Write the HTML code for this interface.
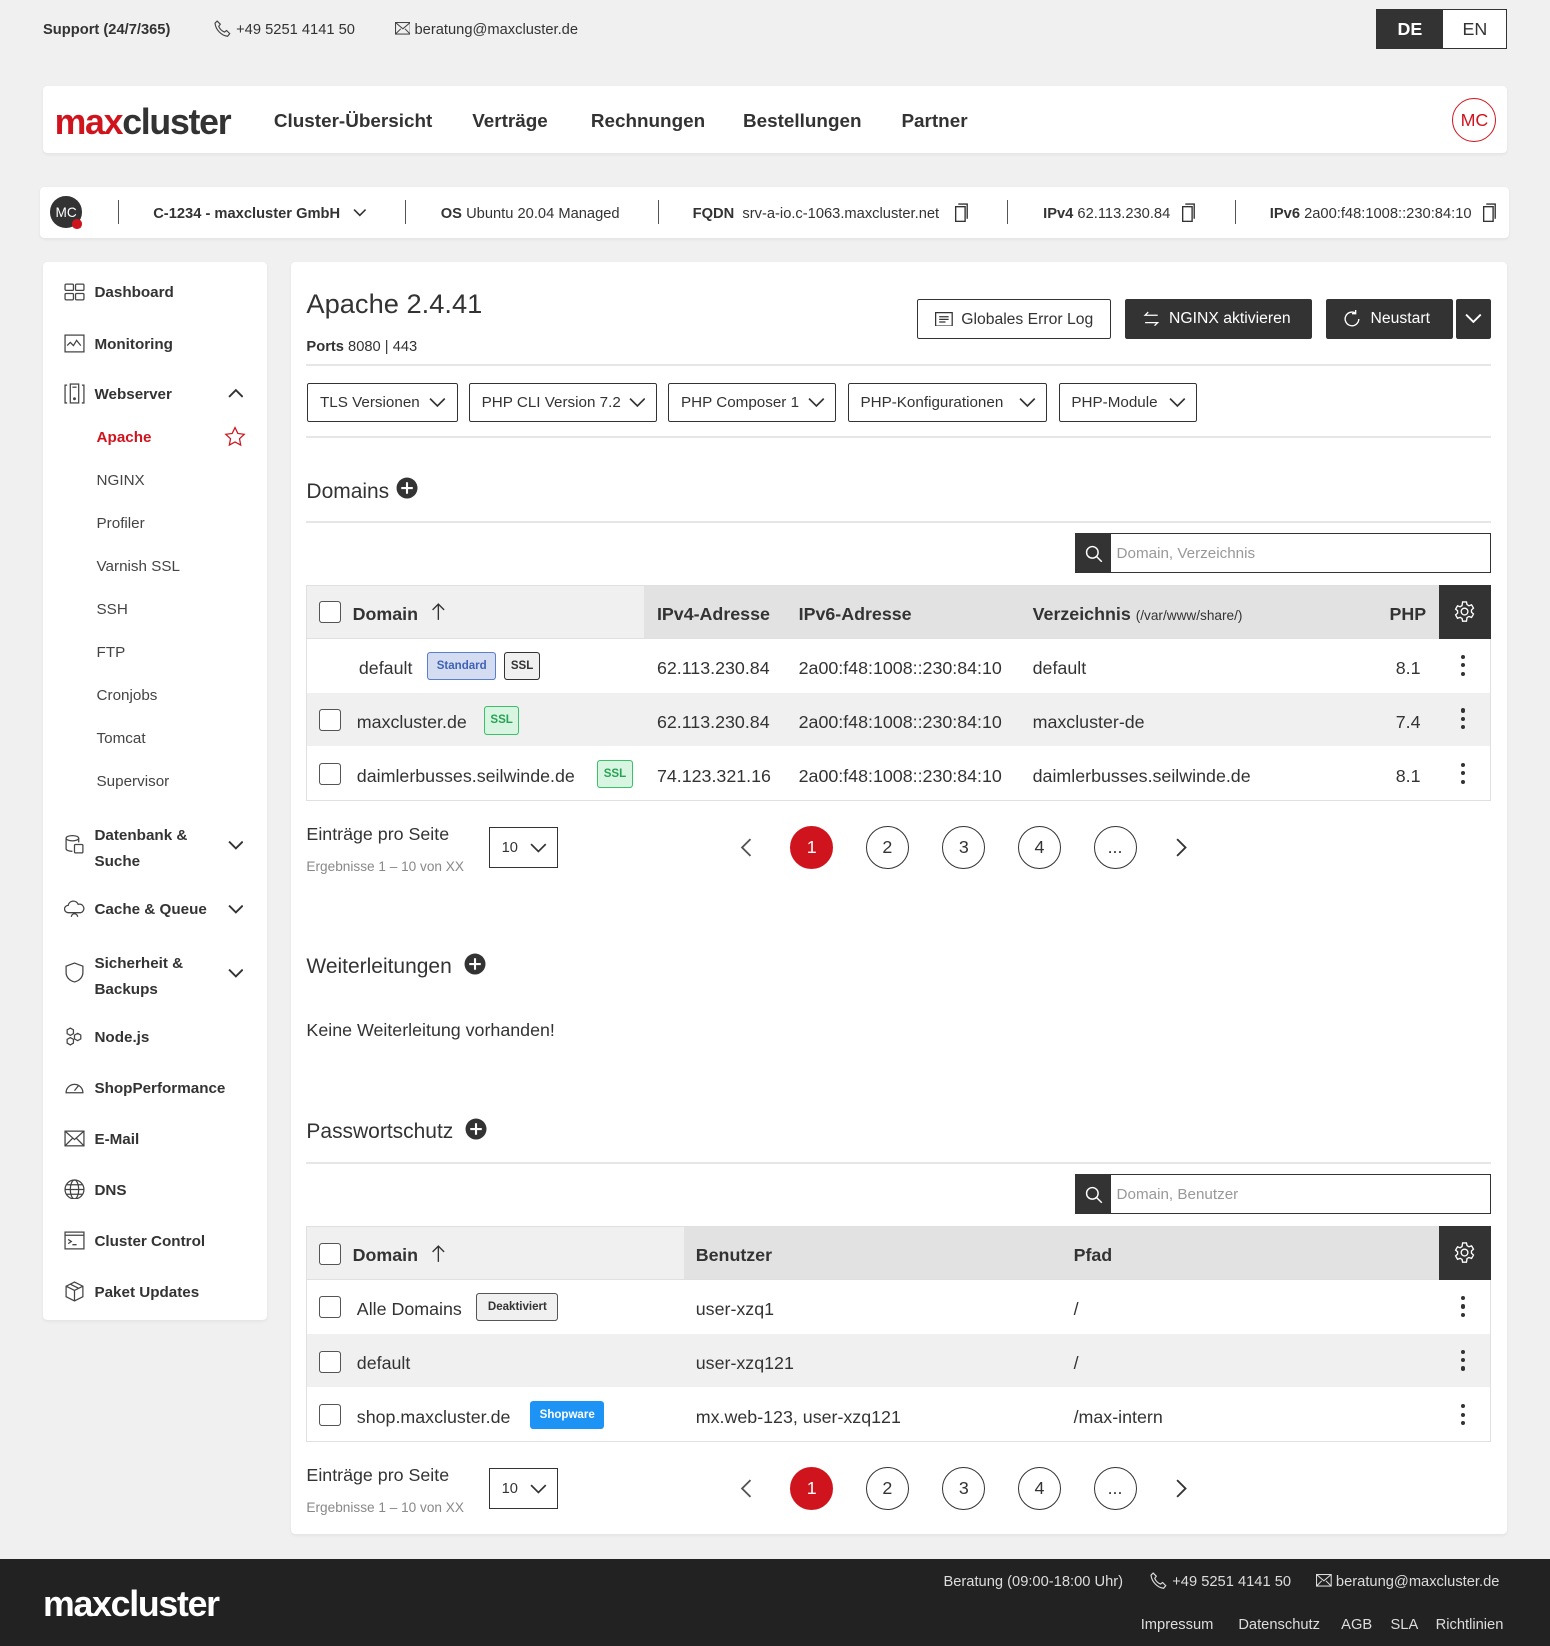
<!DOCTYPE html>
<html><head><meta charset="utf-8">
<style>
*{box-sizing:border-box;margin:0;padding:0}
html,body{width:1550px;height:1646px;overflow:hidden;background:#f0f0f0}
#w{zoom:1.04943;width:1477px;height:1569px;position:relative;font-family:"Liberation Sans",sans-serif;color:#333;background:#f0f0f0}
.a{position:absolute}
.t{position:absolute;line-height:20px;white-space:nowrap;margin-top:2px}
.card{position:absolute;background:#fff;border-radius:4px;box-shadow:0 1px 3px rgba(0,0,0,.06)}
.b{font-weight:bold}
.nav{font-size:18px;font-weight:bold;color:#333}
.sb{font-size:14.5px;font-weight:bold}
.sub{font-size:14.5px;color:#444}
.ic{position:absolute;width:20px;height:20px;left:61px}
.hr{position:absolute;height:2px;background:#e6e6e6}
.dd{position:absolute;height:37px;top:365px;border:1px solid #333;border-radius:2px;font-size:14.5px;padding:0 11px;line-height:37px;color:#333;background:#fff}
.dd svg{position:absolute;right:10px;top:11px}
.h2{font-size:20px;color:#333}
.row{position:absolute;left:292px;width:1129px;height:52px;border:1px solid #e0e0e0;border-top:none}
.cb{position:absolute;width:21px;height:21px;border:1.5px solid #555;border-radius:3px;background:#fff}
.td{font-size:17px;color:#333}
.th{font-size:17px;font-weight:bold;color:#333}
.badge{position:absolute;height:27px;border-radius:3px;font-size:11px;font-weight:bold;line-height:25px;text-align:center}
.pc{position:absolute;width:41px;height:41px;border-radius:50%;border:1.5px solid #333;text-align:center;line-height:39px;font-size:17px}
.dots{position:absolute;width:4px}
.dots i{display:block;width:4px;height:4px;border-radius:50%;background:#333;margin-bottom:4px}
.search{position:absolute;left:1024px;width:397px;height:38px;border:1px solid #333;background:#fff}
.search .ico{position:absolute;left:0;top:0;width:34px;height:36px;background:#333}
.search span{position:absolute;left:39px;top:10px;font-size:14.5px;color:#999}
.btn{position:absolute;top:285px;height:38px;border-radius:2px;font-size:15px;font-weight:bold;line-height:38px}
</style></head><body><div id="w">

<div class="t b" style="left:41px;top:17px;font-size:14px">Support (24/7/365)</div>
<svg class="a" style="left:204px;top:19px" width="16" height="17" viewBox="0 0 16 17"><path d="M3 1l3 3-1.5 2c1 2.5 3 4.5 5.5 5.5L12 10l3 3-2 2.5C7 15 1.5 9 1 3z" fill="none" stroke="#444" stroke-width="1.1"/></svg>
<div class="t" style="left:225px;top:17px;font-size:14px">+49 5251 4141 50</div>
<svg class="a" style="left:376px;top:21px" width="15" height="12" viewBox="0 0 15 12"><rect x=".5" y=".5" width="14" height="11" fill="none" stroke="#444"/><path d="M.5 .5l7 6 7-6M.5 11.5l5-5M14.5 11.5l-5-5" fill="none" stroke="#444"/></svg>
<div class="t" style="left:395px;top:17px;font-size:14px">beratung@maxcluster.de</div>
<div class="a" style="left:1311px;top:9px;width:125px;height:38px;border:1px solid #333;background:#fff">
 <div class="a b" style="left:0;top:0;width:63px;height:36px;background:#333;color:#fff;text-align:center;line-height:38px;font-size:17px">DE</div>
 <div class="a" style="left:63px;top:0;width:61px;height:36px;text-align:center;line-height:38px;font-size:17px">EN</div>
</div>

<div class="card" style="left:41px;top:82px;width:1395px;height:64px"></div>
<div class="t b" style="left:52px;top:96px;font-size:34px;line-height:38px;letter-spacing:-1.2px"><span style="color:#d0141e">max</span><span style="color:#333">cluster</span></div>
<div class="t nav" style="left:261px;top:104px">Cluster-Übersicht</div>
<div class="t nav" style="left:450px;top:104px">Verträge</div>
<div class="t nav" style="left:563px;top:104px">Rechnungen</div>
<div class="t nav" style="left:708px;top:104px">Bestellungen</div>
<div class="t nav" style="left:859px;top:104px">Partner</div>
<div class="a" style="left:1384px;top:93px;width:42px;height:42px;border:1.5px solid #d0141e;border-radius:50%;color:#d0141e;text-align:center;line-height:41px;font-size:17px">MC</div>

<div class="card" style="left:38px;top:178px;width:1400px;height:49px"></div>
<div class="a" style="left:48px;top:187px;width:30px;height:30px;border-radius:50%;background:#333;color:#fff;font-size:13px;text-align:center;line-height:32px">MC</div>
<div class="a" style="left:69px;top:209px;width:9px;height:9px;border-radius:50%;background:#d0141e"></div>
<div class="a" style="left:112px;top:191px;width:1px;height:22px;background:#555"></div>
<div class="a" style="left:386px;top:191px;width:1px;height:22px;background:#555"></div>
<div class="a" style="left:627px;top:191px;width:1px;height:22px;background:#555"></div>
<div class="a" style="left:960px;top:191px;width:1px;height:22px;background:#555"></div>
<div class="a" style="left:1177px;top:191px;width:1px;height:22px;background:#555"></div>
<div class="t b" style="left:146px;top:192px;font-size:14px">C-1234 - maxcluster GmbH</div>
<svg class="a" style="left:336px;top:198px" width="13" height="9" viewBox="0 0 13 9"><path d="M1 1.5l5.5 5.5 5.5-5.5" fill="none" stroke="#333" stroke-width="1.5"/></svg>
<div class="t" style="left:420px;top:192px;font-size:14px"><b>OS</b> Ubuntu 20.04 Managed</div>
<div class="t" style="left:660px;top:192px;font-size:14px"><b>FQDN</b>&nbsp; srv-a-io.c-1063.maxcluster.net</div>
<svg class="a" style="left:907px;top:193px" width="16" height="19" viewBox="0 0 16 19"><rect x="3.5" y="3.5" width="9" height="14" fill="none" stroke="#333" stroke-width="1.3"/><path d="M6 1h8.5v14" fill="none" stroke="#333" stroke-width="1.3"/></svg>
<div class="t" style="left:994px;top:192px;font-size:14px"><b>IPv4</b> 62.113.230.84</div>
<svg class="a" style="left:1123px;top:193px" width="16" height="19" viewBox="0 0 16 19"><rect x="3.5" y="3.5" width="9" height="14" fill="none" stroke="#333" stroke-width="1.3"/><path d="M6 1h8.5v14" fill="none" stroke="#333" stroke-width="1.3"/></svg>
<div class="t" style="left:1210px;top:192px;font-size:14px"><b>IPv6</b> 2a00:f48:1008::230:84:10</div>
<svg class="a" style="left:1410px;top:193px" width="16" height="19" viewBox="0 0 16 19"><rect x="3.5" y="3.5" width="9" height="14" fill="none" stroke="#333" stroke-width="1.3"/><path d="M6 1h8.5v14" fill="none" stroke="#333" stroke-width="1.3"/></svg>

<div class="card" style="left:41px;top:250px;width:213px;height:1008px"></div>
<svg class="ic" style="top:269px" viewBox="0 0 20 20" fill="none" stroke="#444" stroke-width="1.2"><rect x="1" y="2" width="8" height="6" rx="1"/><rect x="11" y="2" width="8" height="6" rx="1"/><rect x="1" y="11" width="8" height="6" rx="1"/><rect x="11" y="11" width="8" height="6" rx="1"/></svg>
<div class="t sb" style="left:90px;top:268px">Dashboard</div>
<svg class="ic" style="top:317px" viewBox="0 0 20 20" fill="none" stroke="#444" stroke-width="1.2"><rect x="1" y="2" width="18" height="16"/><path d="M3 12l3-3 3 3 3-5 4 5"/></svg>
<div class="t sb" style="left:90px;top:317px">Monitoring</div>
<svg class="ic" style="top:365px" viewBox="0 0 20 20" fill="none" stroke="#444" stroke-width="1.2"><path d="M3 2H1v17h2M17 2h2v17h-2"/><rect x="6" y="1" width="8" height="18"/><path d="M8 4h4"/><circle cx="10" cy="15" r=".8" fill="#444"/></svg>
<div class="t sb" style="left:90px;top:365px">Webserver</div>
<svg class="a" style="left:217px;top:370px" width="15" height="10" viewBox="0 0 15 10"><path d="M1 8.5l6.5-6.5 6.5 6.5" fill="none" stroke="#333" stroke-width="1.8"/></svg>
<div class="t sb" style="left:92px;top:406px;color:#d0141e">Apache</div>
<svg class="a" style="left:213px;top:406px" width="21" height="20" viewBox="0 0 21 20"><path d="M10.5 1.5l2.7 5.6 6.1.8-4.5 4.2 1.1 6.1-5.4-3-5.4 3 1.1-6.1-4.5-4.2 6.1-.8z" fill="none" stroke="#d0141e" stroke-width="1.2"/></svg>
<div class="t sub" style="left:92px;top:447px">NGINX</div>
<div class="t sub" style="left:92px;top:488px">Profiler</div>
<div class="t sub" style="left:92px;top:529px">Varnish SSL</div>
<div class="t sub" style="left:92px;top:570px">SSH</div>
<div class="t sub" style="left:92px;top:611px">FTP</div>
<div class="t sub" style="left:92px;top:652px">Cronjobs</div>
<div class="t sub" style="left:92px;top:693px">Tomcat</div>
<div class="t sub" style="left:92px;top:734px">Supervisor</div>
<svg class="ic" style="top:795px" viewBox="0 0 20 20" fill="none" stroke="#444" stroke-width="1.2"><ellipse cx="8" cy="4" rx="6" ry="2.5"/><path d="M2 4v10c0 1.4 2.7 2.5 6 2.5M14 4v4"/><rect x="10" y="10" width="8" height="8" rx="1"/></svg>
<div class="t sb" style="left:90px;top:782px;line-height:25px">Datenbank &amp;<br>Suche</div>
<svg class="a" style="left:217px;top:800px" width="15" height="10" viewBox="0 0 15 10"><path d="M1 1.5l6.5 6.5 6.5-6.5" fill="none" stroke="#333" stroke-width="1.8"/></svg>
<svg class="ic" style="top:856px" viewBox="0 0 20 20" fill="none" stroke="#444" stroke-width="1.2"><path d="M4 14a3.5 3.5 0 010-7 5 5 0 019.5-1A4 4 0 0116 14zM7 18a3 3 0 016-0"/></svg>
<div class="t sb" style="left:90px;top:856px">Cache &amp; Queue</div>
<svg class="a" style="left:217px;top:861px" width="15" height="10" viewBox="0 0 15 10"><path d="M1 1.5l6.5 6.5 6.5-6.5" fill="none" stroke="#333" stroke-width="1.8"/></svg>
<svg class="ic" style="top:917px" viewBox="0 0 20 20" fill="none" stroke="#444" stroke-width="1.2"><path d="M10 1l8 3v6c0 5-4 8-8 9-4-1-8-4-8-9V4z"/></svg>
<div class="t sb" style="left:90px;top:904px;line-height:25px">Sicherheit &amp;<br>Backups</div>
<svg class="a" style="left:217px;top:922px" width="15" height="10" viewBox="0 0 15 10"><path d="M1 1.5l6.5 6.5 6.5-6.5" fill="none" stroke="#333" stroke-width="1.8"/></svg>
<svg class="ic" style="top:978px" viewBox="0 0 20 20" fill="none" stroke="#444" stroke-width="1.2"><path d="M6 2l3 1.7v3.6L6 9 3 7.3V3.7zM13 7l3 1.7v3.6L13 14l-3-1.7V8.7zM6 11l3 1.7v3.6L6 18l-3-1.7v-3.6z"/></svg>
<div class="t sb" style="left:90px;top:978px">Node.js</div>
<svg class="ic" style="top:1026px" viewBox="0 0 20 20" fill="none" stroke="#444" stroke-width="1.2"><path d="M2 15a8 8 0 1116 0z"/><path d="M10 13l4-5"/></svg>
<div class="t sb" style="left:90px;top:1026px">ShopPerformance</div>
<svg class="ic" style="top:1075px" viewBox="0 0 20 20" fill="none" stroke="#444" stroke-width="1.2"><rect x="1" y="3" width="18" height="14"/><path d="M1 3l9 8 9-8M1 17l7-7M19 17l-7-7"/></svg>
<div class="t sb" style="left:90px;top:1075px">E-Mail</div>
<svg class="ic" style="top:1123px" viewBox="0 0 20 20" fill="none" stroke="#444" stroke-width="1.2"><circle cx="10" cy="10" r="9"/><ellipse cx="10" cy="10" rx="4" ry="9"/><path d="M1 10h18M2.5 5.5h15M2.5 14.5h15"/></svg>
<div class="t sb" style="left:90px;top:1123px">DNS</div>
<svg class="ic" style="top:1172px" viewBox="0 0 20 20" fill="none" stroke="#444" stroke-width="1.2"><rect x="1" y="2" width="18" height="16"/><path d="M1 5h18M4 9l3 2-3 2M8 14h4"/></svg>
<div class="t sb" style="left:90px;top:1172px">Cluster Control</div>
<svg class="ic" style="top:1221px" viewBox="0 0 20 20" fill="none" stroke="#444" stroke-width="1.2"><path d="M10 1l8 4v10l-8 4-8-4V5zM2 5l8 4 8-4M10 9v10M6 3l8 4"/></svg>
<div class="t sb" style="left:90px;top:1221px">Paket Updates</div>

<div class="card" style="left:277px;top:250px;width:1159px;height:1212px"></div>
<div class="t" style="left:292px;top:272px;font-size:26px;line-height:30px">Apache 2.4.41</div>
<div class="t" style="left:292px;top:319px;font-size:14px"><b>Ports</b> 8080 | 443</div>

<div class="btn" style="left:874px;width:185px;border:1px solid #333;background:#fff;color:#333;font-weight:normal">
 <svg class="a" style="left:16px;top:11px" width="17" height="14" viewBox="0 0 17 14" fill="none" stroke="#333" stroke-width="1.2"><rect x=".6" y=".6" width="15.8" height="12.8"/><path d="M4 4.5h9M4 7h9M4 9.5h6"/></svg>
 <span class="a" style="left:41px">Globales Error Log</span></div>
<div class="btn" style="left:1072px;width:178px;background:#333;color:#fff;font-weight:normal">
 <svg class="a" style="left:17px;top:10px" width="16" height="17" viewBox="0 0 16 17" fill="none" stroke="#fff" stroke-width="1.2"><path d="M14 5H2l3-3M2 12h12l-3 3"/></svg>
 <span class="a" style="left:42px">NGINX aktivieren</span></div>
<div class="btn" style="left:1264px;width:121px;background:#333;color:#fff;font-weight:normal">
 <svg class="a" style="left:15px;top:9px" width="19" height="19" viewBox="0 0 19 19" fill="none" stroke="#fff" stroke-width="1.3"><path d="M16 9.5A6.5 6.5 0 1113 4M13 1v3.5h-3.5"/></svg>
 <span class="a" style="left:42px">Neustart</span></div>
<div class="btn" style="left:1387px;width:34px;background:#333">
 <svg class="a" style="left:9px;top:13px" width="16" height="10" viewBox="0 0 16 10"><path d="M1 1.5l7 7 7-7" fill="none" stroke="#fff" stroke-width="1.8"/></svg></div>

<div class="hr" style="left:292px;top:347px;width:1129px"></div>
<div class="dd" style="left:293px;width:143px">TLS Versionen<svg width="16" height="12" viewBox="0 0 16 12"><path d="M1 2.5l7 7 7-7" fill="none" stroke="#333" stroke-width="1.6"/></svg></div>
<div class="dd" style="left:447px;width:179px">PHP CLI Version 7.2<svg width="16" height="12" viewBox="0 0 16 12"><path d="M1 2.5l7 7 7-7" fill="none" stroke="#333" stroke-width="1.6"/></svg></div>
<div class="dd" style="left:637px;width:160px">PHP Composer 1<svg width="16" height="12" viewBox="0 0 16 12"><path d="M1 2.5l7 7 7-7" fill="none" stroke="#333" stroke-width="1.6"/></svg></div>
<div class="dd" style="left:808px;width:190px">PHP-Konfigurationen<svg width="16" height="12" viewBox="0 0 16 12"><path d="M1 2.5l7 7 7-7" fill="none" stroke="#333" stroke-width="1.6"/></svg></div>
<div class="dd" style="left:1009px;width:132px">PHP-Module<svg width="16" height="12" viewBox="0 0 16 12"><path d="M1 2.5l7 7 7-7" fill="none" stroke="#333" stroke-width="1.6"/></svg></div>
<div class="hr" style="left:292px;top:415px;width:1129px"></div>

<div class="t h2" style="left:292px;top:455px;line-height:22px">Domains</div>
<svg class="a" style="left:377px;top:455px" width="21" height="21" viewBox="0 0 21 21"><circle cx="10.5" cy="10.5" r="10" fill="#333"/><path d="M10.5 5v11M5 10.5h11" stroke="#fff" stroke-width="2"/></svg>
<div class="hr" style="left:292px;top:496px;width:1129px"></div>
<div class="search" style="top:508px"><div class="ico"><svg class="a" style="left:9px;top:10px" width="17" height="17" viewBox="0 0 17 17" fill="none" stroke="#fff" stroke-width="1.4"><circle cx="7" cy="7" r="5.5"/><path d="M11 11l5 5"/></svg></div><span>Domain, Verzeichnis</span></div>

<div class="a" style="left:292px;top:557px;width:1129px;height:52px;background:#e2e2e2;border:1px solid #e0e0e0"></div>
<div class="a" style="left:293px;top:558px;width:321px;height:50px;background:#f0f0f0"></div>
<div class="a" style="left:1371px;top:557px;width:50px;height:52px;background:#333"></div>
<svg class="a" style="left:1385px;top:572px" width="22" height="22" viewBox="0 0 24 24" fill="none" stroke="#fff" stroke-width="1.4"><circle cx="12" cy="12" r="3.5"/><path d="M10 2h4l.6 2.8 2 1.2 2.7-1 2 3.5-2.1 1.9v2.3l2.1 1.9-2 3.5-2.7-1-2 1.2L14 22h-4l-.6-2.8-2-1.2-2.7 1-2-3.5 2.1-1.9v-2.3L2.7 9.5l2-3.5 2.7 1 2-1.2z"/></svg>
<div class="cb" style="left:304px;top:573px"></div>
<div class="t th" style="left:336px;top:574px">Domain</div>
<svg class="a" style="left:411px;top:574px" width="14" height="18" viewBox="0 0 14 18"><path d="M7 17V2M1.5 7.5L7 2l5.5 5.5" fill="none" stroke="#333" stroke-width="1.3"/></svg>
<div class="t th" style="left:626px;top:574px">IPv4-Adresse</div>
<div class="t th" style="left:761px;top:574px">IPv6-Adresse</div>
<div class="t th" style="left:984px;top:574px">Verzeichnis <span style="font-weight:normal;font-size:13px">(/var/www/share/)</span></div>
<div class="t th" style="left:1324px;top:574px">PHP</div>

<div class="row" style="top:609px;background:#fff"></div>
<div class="row" style="top:660px;background:#f0f0f0"></div>
<div class="row" style="top:711px;background:#fff"></div>

<div class="t td" style="left:342px;top:625px">default</div>
<div class="badge" style="left:407px;top:621px;width:66px;background:#d4dcf2;border:1px solid #5b7fc9;color:#3f63b5">Standard</div>
<div class="badge" style="left:480px;top:621px;width:35px;background:#f0f0f0;border:1px solid #333;color:#333">SSL</div>
<div class="t td" style="left:626px;top:625px">62.113.230.84</div>
<div class="t td" style="left:761px;top:625px">2a00:f48:1008::230:84:10</div>
<div class="t td" style="left:984px;top:625px">default</div>
<div class="t td" style="left:1330px;top:625px">8.1</div>
<div class="dots" style="left:1392px;top:624px"><i></i><i></i><i></i></div>

<div class="cb" style="left:304px;top:676px"></div>
<div class="t td" style="left:340px;top:676px">maxcluster.de</div>
<div class="badge" style="left:461px;top:673px;width:34px;background:#d8f5e2;border:1px solid #3cc06a;color:#28a355">SSL</div>
<div class="t td" style="left:626px;top:676px">62.113.230.84</div>
<div class="t td" style="left:761px;top:676px">2a00:f48:1008::230:84:10</div>
<div class="t td" style="left:984px;top:676px">maxcluster-de</div>
<div class="t td" style="left:1330px;top:676px">7.4</div>
<div class="dots" style="left:1392px;top:675px"><i></i><i></i><i></i></div>

<div class="cb" style="left:304px;top:727px"></div>
<div class="t td" style="left:340px;top:728px">daimlerbusses.seilwinde.de</div>
<div class="badge" style="left:569px;top:724px;width:34px;background:#d8f5e2;border:1px solid #3cc06a;color:#28a355">SSL</div>
<div class="t td" style="left:626px;top:728px">74.123.321.16</div>
<div class="t td" style="left:761px;top:728px">2a00:f48:1008::230:84:10</div>
<div class="t td" style="left:984px;top:728px">daimlerbusses.seilwinde.de</div>
<div class="t td" style="left:1330px;top:728px">8.1</div>
<div class="dots" style="left:1392px;top:727px"><i></i><i></i><i></i></div>

<div class="t" style="left:292px;top:783px;font-size:17px">Einträge pro Seite</div>
<div class="t" style="left:292px;top:815px;font-size:13px;color:#888">Ergebnisse 1 – 10 von XX</div>
<div class="a" style="left:466px;top:788px;width:66px;height:39px;border:1px solid #333;font-size:14px;line-height:39px;padding-left:11px">10<svg class="a" style="left:38px;top:13px" width="16" height="11" viewBox="0 0 16 11"><path d="M1 2l7 7 7-7" fill="none" stroke="#333" stroke-width="1.6"/></svg></div>
<svg class="a" style="left:705px;top:798px" width="12" height="20" viewBox="0 0 12 20"><path d="M10 2L2 10l8 8" fill="none" stroke="#555" stroke-width="1.8"/></svg>
<div class="pc" style="left:753px;top:787px;background:#d0141e;border-color:#d0141e;color:#fff">1</div>
<div class="pc" style="left:825px;top:787px">2</div>
<div class="pc" style="left:898px;top:787px">3</div>
<div class="pc" style="left:970px;top:787px">4</div>
<div class="pc" style="left:1042px;top:787px">...</div>
<svg class="a" style="left:1120px;top:798px" width="12" height="20" viewBox="0 0 12 20"><path d="M2 2l8 8-8 8" fill="none" stroke="#333" stroke-width="1.8"/></svg>

<div class="t h2" style="left:292px;top:908px;line-height:22px">Weiterleitungen</div>
<svg class="a" style="left:442px;top:908px" width="21" height="21" viewBox="0 0 21 21"><circle cx="10.5" cy="10.5" r="10" fill="#333"/><path d="M10.5 5v11M5 10.5h11" stroke="#fff" stroke-width="2"/></svg>
<div class="t" style="left:292px;top:970px;font-size:17px">Keine Weiterleitung vorhanden!</div>

<div class="t h2" style="left:292px;top:1065px;line-height:22px">Passwortschutz</div>
<svg class="a" style="left:443px;top:1065px" width="21" height="21" viewBox="0 0 21 21"><circle cx="10.5" cy="10.5" r="10" fill="#333"/><path d="M10.5 5v11M5 10.5h11" stroke="#fff" stroke-width="2"/></svg>
<div class="hr" style="left:292px;top:1107px;width:1129px"></div>
<div class="search" style="top:1119px"><div class="ico"><svg class="a" style="left:9px;top:10px" width="17" height="17" viewBox="0 0 17 17" fill="none" stroke="#fff" stroke-width="1.4"><circle cx="7" cy="7" r="5.5"/><path d="M11 11l5 5"/></svg></div><span>Domain, Benutzer</span></div>

<div class="a" style="left:292px;top:1168px;width:1129px;height:52px;background:#e2e2e2;border:1px solid #e0e0e0"></div>
<div class="a" style="left:293px;top:1169px;width:359px;height:50px;background:#f0f0f0"></div>
<div class="a" style="left:1371px;top:1168px;width:50px;height:52px;background:#333"></div>
<svg class="a" style="left:1385px;top:1183px" width="22" height="22" viewBox="0 0 24 24" fill="none" stroke="#fff" stroke-width="1.4"><circle cx="12" cy="12" r="3.5"/><path d="M10 2h4l.6 2.8 2 1.2 2.7-1 2 3.5-2.1 1.9v2.3l2.1 1.9-2 3.5-2.7-1-2 1.2L14 22h-4l-.6-2.8-2-1.2-2.7 1-2-3.5 2.1-1.9v-2.3L2.7 9.5l2-3.5 2.7 1 2-1.2z"/></svg>
<div class="cb" style="left:304px;top:1184px"></div>
<div class="t th" style="left:336px;top:1184px">Domain</div>
<svg class="a" style="left:411px;top:1185px" width="14" height="18" viewBox="0 0 14 18"><path d="M7 17V2M1.5 7.5L7 2l5.5 5.5" fill="none" stroke="#333" stroke-width="1.3"/></svg>
<div class="t th" style="left:663px;top:1184px">Benutzer</div>
<div class="t th" style="left:1023px;top:1184px">Pfad</div>

<div class="row" style="top:1220px;background:#fff"></div>
<div class="row" style="top:1271px;background:#f0f0f0"></div>
<div class="row" style="top:1322px;background:#fff"></div>

<div class="cb" style="left:304px;top:1235px"></div>
<div class="t td" style="left:340px;top:1236px">Alle Domains</div>
<div class="badge" style="left:454px;top:1232px;width:78px;background:#f0f0f0;border:1px solid #555;color:#333">Deaktiviert</div>
<div class="t td" style="left:663px;top:1236px">user-xzq1</div>
<div class="t td" style="left:1023px;top:1236px">/</div>
<div class="dots" style="left:1392px;top:1235px"><i></i><i></i><i></i></div>

<div class="cb" style="left:304px;top:1287px"></div>
<div class="t td" style="left:340px;top:1287px">default</div>
<div class="t td" style="left:663px;top:1287px">user-xzq121</div>
<div class="t td" style="left:1023px;top:1287px">/</div>
<div class="dots" style="left:1392px;top:1286px"><i></i><i></i><i></i></div>

<div class="cb" style="left:304px;top:1338px"></div>
<div class="t td" style="left:340px;top:1339px">shop.maxcluster.de</div>
<div class="badge" style="left:505px;top:1335px;width:71px;background:#1d94f5;color:#fff;border:1px solid #1d94f5">Shopware</div>
<div class="t td" style="left:663px;top:1339px">mx.web-123, user-xzq121</div>
<div class="t td" style="left:1023px;top:1339px">/max-intern</div>
<div class="dots" style="left:1392px;top:1338px"><i></i><i></i><i></i></div>

<div class="t" style="left:292px;top:1394px;font-size:17px">Einträge pro Seite</div>
<div class="t" style="left:292px;top:1425px;font-size:13px;color:#888">Ergebnisse 1 – 10 von XX</div>
<div class="a" style="left:466px;top:1399px;width:66px;height:39px;border:1px solid #333;font-size:14px;line-height:39px;padding-left:11px">10<svg class="a" style="left:38px;top:13px" width="16" height="11" viewBox="0 0 16 11"><path d="M1 2l7 7 7-7" fill="none" stroke="#333" stroke-width="1.6"/></svg></div>
<svg class="a" style="left:705px;top:1408px" width="12" height="20" viewBox="0 0 12 20"><path d="M10 2L2 10l8 8" fill="none" stroke="#555" stroke-width="1.8"/></svg>
<div class="pc" style="left:753px;top:1398px;background:#d0141e;border-color:#d0141e;color:#fff">1</div>
<div class="pc" style="left:825px;top:1398px">2</div>
<div class="pc" style="left:898px;top:1398px">3</div>
<div class="pc" style="left:970px;top:1398px">4</div>
<div class="pc" style="left:1042px;top:1398px">...</div>
<svg class="a" style="left:1120px;top:1408px" width="12" height="20" viewBox="0 0 12 20"><path d="M2 2l8 8-8 8" fill="none" stroke="#333" stroke-width="1.8"/></svg>

<div class="a" style="left:0;top:1486px;width:1477px;height:83px;background:#222"></div>
<div class="t b" style="left:41px;top:1508px;font-size:34px;line-height:38px;color:#fff;letter-spacing:-1.2px">maxcluster</div>
<div class="t" style="left:899px;top:1496px;font-size:14px;color:#ddd">Beratung (09:00-18:00 Uhr)</div>
<svg class="a" style="left:1096px;top:1498px" width="16" height="17" viewBox="0 0 16 17"><path d="M3 1l3 3-1.5 2c1 2.5 3 4.5 5.5 5.5L12 10l3 3-2 2.5C7 15 1.5 9 1 3z" fill="none" stroke="#ddd" stroke-width="1.1"/></svg>
<div class="t" style="left:1117px;top:1496px;font-size:14px;color:#ddd">+49 5251 4141 50</div>
<svg class="a" style="left:1254px;top:1500px" width="15" height="12" viewBox="0 0 15 12"><rect x=".5" y=".5" width="14" height="11" fill="none" stroke="#ddd"/><path d="M.5 .5l7 6 7-6M.5 11.5l5-5M14.5 11.5l-5-5" fill="none" stroke="#ddd"/></svg>
<div class="t" style="left:1273px;top:1496px;font-size:14px;color:#ddd">beratung@maxcluster.de</div>
<div class="t" style="left:1087px;top:1537px;font-size:14px;color:#ddd">Impressum</div>
<div class="t" style="left:1180px;top:1537px;font-size:14px;color:#ddd">Datenschutz</div>
<div class="t" style="left:1278px;top:1537px;font-size:14px;color:#ddd">AGB</div>
<div class="t" style="left:1325px;top:1537px;font-size:14px;color:#ddd">SLA</div>
<div class="t" style="left:1368px;top:1537px;font-size:14px;color:#ddd">Richtlinien</div>

</div></body></html>
